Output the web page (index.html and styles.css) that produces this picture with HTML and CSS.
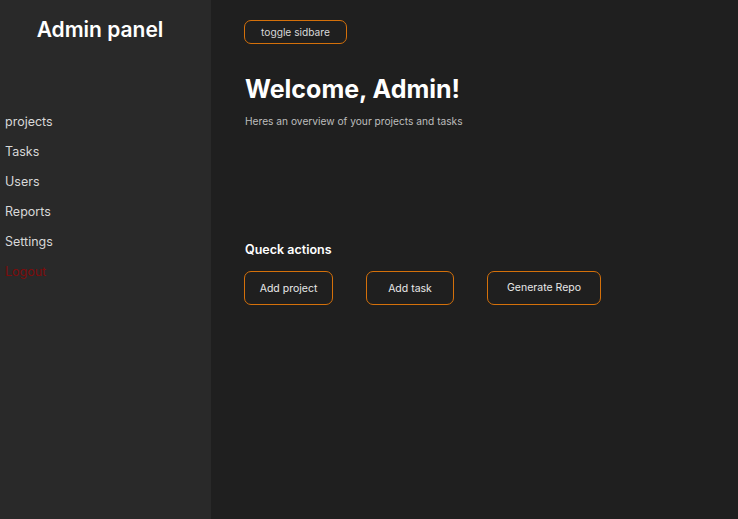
FILE: index.html
```html
<!DOCTYPE html>
<html>
<head>
<meta charset="utf-8">
<link rel="stylesheet" href="styles.css">
</head>
<body>
<div class="layout">
  <aside class="sidebar">
    <h1 class="brand">Admin panel</h1>
    <nav class="nav">
      <a class="nav-item">projects</a>
      <a class="nav-item">Tasks</a>
      <a class="nav-item">Users</a>
      <a class="nav-item">Reports</a>
      <a class="nav-item">Settings</a>
      <a class="nav-item logout">Logout</a>
    </nav>
  </aside>
  <main class="main">
    <button class="btn toggle">toggle sidbare</button>
    <h2 class="welcome">Welcome, Admin!</h2>
    <p class="subtitle">Heres an overview of your projects and tasks</p>
    <h3 class="section-title">Queck actions</h3>
    <div class="actions">
      <button class="btn action w-project">Add project</button>
      <button class="btn action w-task">Add task</button>
      <button class="btn action w-repo">Generate Repo</button>
    </div>
  </main>
</div>
</body>
</html>
```
FILE: styles.css
```css
* { box-sizing: border-box; }
html, body { margin: 0; height: 100%; }
body {
  font-family: Inter, "Noto Sans", sans-serif;
  background: #1f1f1f;
  color: #fff;
}
.layout { display: flex; height: 519px; }
.sidebar {
  width: 211px;
  background: #292929;
  flex-shrink: 0;
  padding-right: 11px;
}
.brand {
  margin: 16px 0 0;
  text-align: center;
  font-size: 21px;
  font-weight: 600;
  line-height: 28px;
}
.nav {
  display: flex;
  flex-direction: column;
  margin-top: 70px;
  padding-left: 5px;
  gap: 14px;
}
.nav-item {
  font-size: 12.5px;
  line-height: 16px;
  color: #d8d8d8;
}
.nav-item.logout { color: #7d0c0c; }
.main {
  flex: 1;
  padding: 20px 0 0 33px;
}
.btn {
  font-family: inherit;
  background: transparent;
  color: #e8e8e8;
  border: 1.5px solid #d4700a;
  border-radius: 7px;
  font-size: 10.5px;
  cursor: pointer;
}
.toggle {
  display: block;
  width: 103px;
  height: 24px;
  padding: 0 0 1px;
  font-size: 10.2px;
  color: #d8d8d8;
}
.welcome {
  margin: 29px 0 0 1px;
  font-size: 25px;
  font-weight: 700;
  line-height: 32px;
}
.subtitle {
  margin: 9px 0 0 1px;
  font-size: 10.2px;
  line-height: 14px;
  color: #bdbdbd;
}
.section-title {
  margin: 114px 0 0 1px;
  font-size: 12.5px;
  font-weight: 600;
  line-height: 16px;
}
.actions {
  display: flex;
  gap: 33px;
  margin-top: 13px;
}
.action { height: 34px; padding: 0; }
.w-project { width: 89px; }
.w-task { width: 88px; }
.w-repo { width: 114px; padding-bottom: 2px; }
```
